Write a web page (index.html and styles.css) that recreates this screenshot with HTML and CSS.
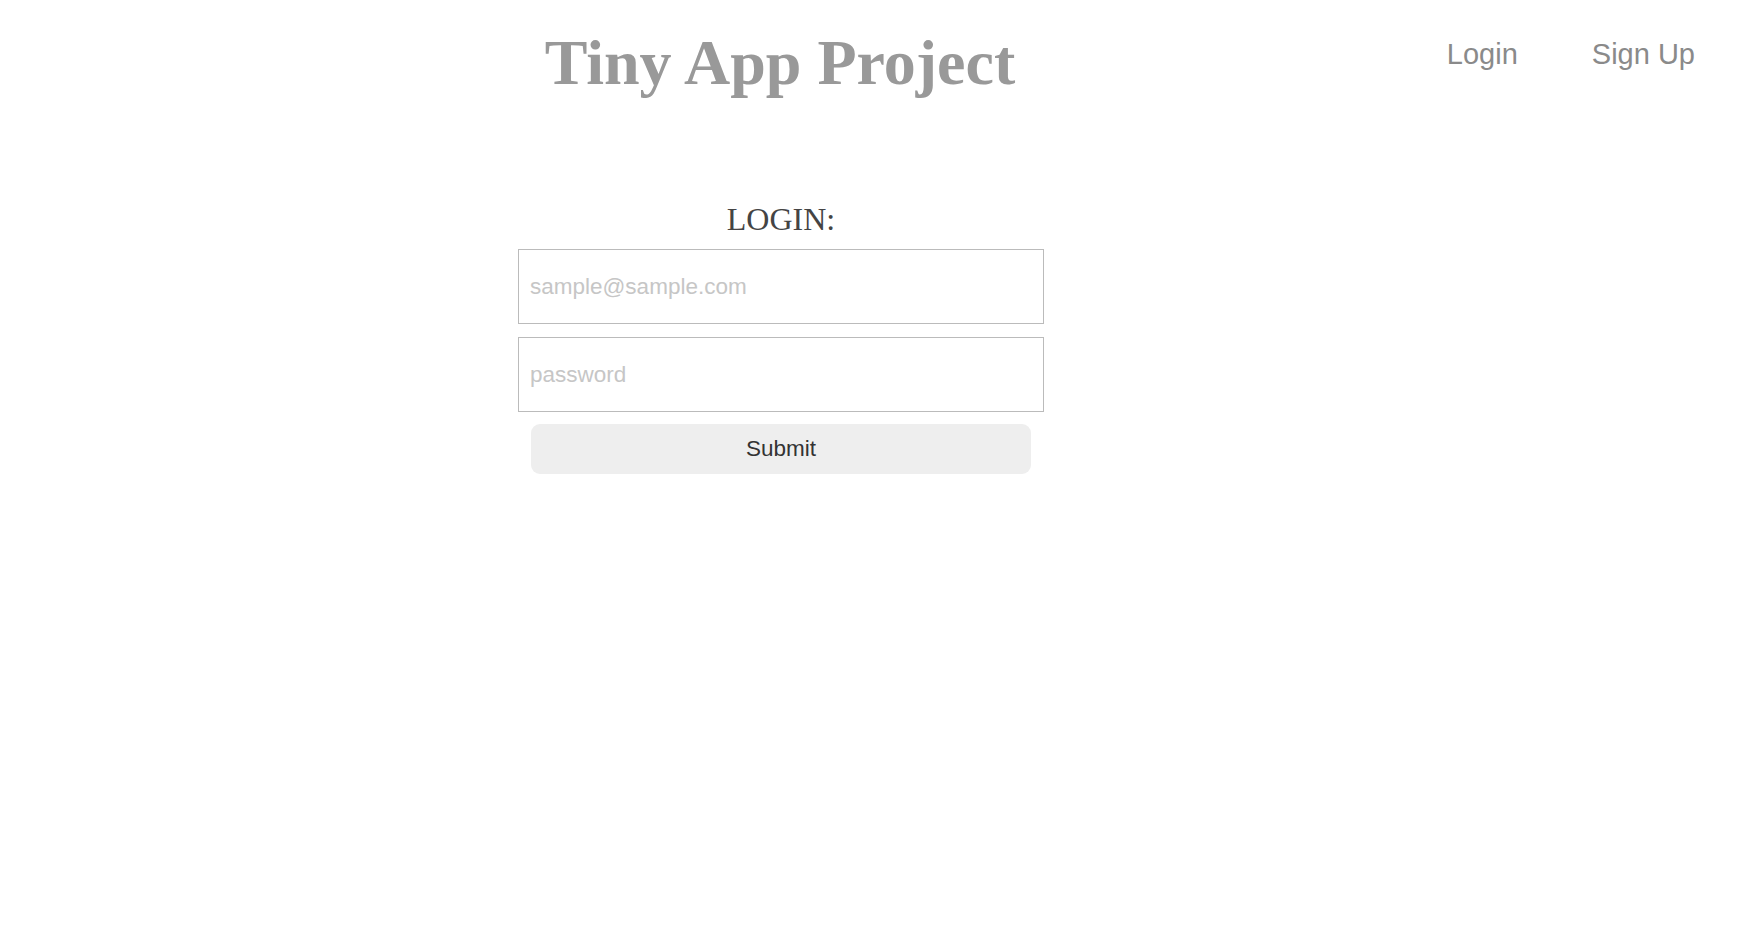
FILE: index.html
```html
<!DOCTYPE html>
<html lang="en">
<head>
<meta charset="utf-8">
<title>Tiny App Project</title>
<link rel="stylesheet" href="styles.css">
</head>
<body>
<header class="site-header">
  <h1 class="site-title">Tiny App Project</h1>
  <nav class="site-nav">
    <a class="nav-link" href="#">Login</a>
    <a class="nav-link" href="#">Sign Up</a>
  </nav>
</header>
<main class="main">
  <form class="login-form">
    <h2 class="form-title">LOGIN:</h2>
    <input class="field" type="email" placeholder="sample@sample.com">
    <input class="field" type="password" placeholder="password">
    <button class="submit" type="button">Submit</button>
  </form>
</main>
</body>
</html>
```

FILE: styles.css
```css
html, body {
  margin: 0;
  padding: 0;
  background: #ffffff;
}

body {
  font-family: "Liberation Sans", Arial, sans-serif;
}

.site-header {
  display: grid;
  grid-template-columns: 1fr auto;
  padding-top: 27px;
}

.site-title {
  margin: 0;
  padding-left: 113px;
  text-align: center;
  font-family: "Liberation Serif", "Times New Roman", serif;
  font-weight: bold;
  font-size: 64px;
  line-height: 72px;
  color: #999999;
}

.site-nav {
  display: flex;
  gap: 74px;
  align-self: start;
  margin-top: 11px;
  padding-right: 45px;
}

.nav-link {
  font-family: "Liberation Sans", Arial, sans-serif;
  font-size: 29px;
  line-height: 33px;
  color: #8a8a8a;
  text-decoration: none;
}

.main {
  display: flex;
  justify-content: center;
  padding-top: 102px;
  padding-right: 178px;
}

.login-form {
  width: 526px;
  display: flex;
  flex-direction: column;
  align-items: center;
}

.form-title {
  margin: 0 0 12px;
  font-family: "Liberation Serif", "Times New Roman", serif;
  font-weight: normal;
  font-size: 32px;
  line-height: 36px;
  color: #444444;
}

.field {
  box-sizing: border-box;
  width: 526px;
  height: 75px;
  margin: 0 0 13px;
  padding: 0 11px;
  border: 1px solid #bbbbbb;
  border-radius: 0;
  font-family: "Liberation Sans", Arial, sans-serif;
  font-size: 22.5px;
  color: #333333;
  outline: none;
}

.field:last-of-type {
  margin-bottom: 12px;
}

.field::placeholder {
  color: #c6c6c6;
}

.submit {
  width: 500px;
  height: 50px;
  border: none;
  border-radius: 9px;
  background: #eeeeee;
  font-family: "Liberation Sans", Arial, sans-serif;
  font-size: 22.5px;
  color: #333333;
  padding: 0;
}
```
